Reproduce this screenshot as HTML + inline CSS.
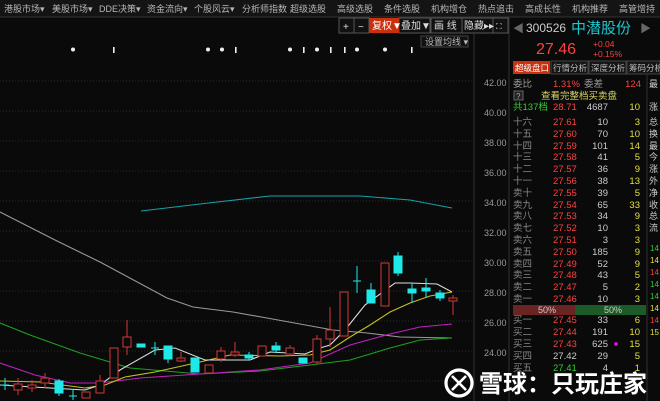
<!DOCTYPE html>
<html><head><meta charset="utf-8"><style>
body{margin:0;background:#0a0a0a;width:660px;height:401px;overflow:hidden}
svg{display:block;font-family:"Liberation Sans","Noto Sans CJK SC",sans-serif}
</style></head><body>
<svg width="660" height="401" viewBox="0 0 660 401" xmlns="http://www.w3.org/2000/svg">
<rect width="660" height="401" fill="#0a0a0a"/>
<rect x="0" y="0" width="660" height="17" fill="#141414"/>
<g fill="#b8b8b8" font-size="9">
<text x="4" y="12">港股市场▾</text><text x="52" y="12">美股市场▾</text><text x="99" y="12">DDE决策▾</text>
<text x="147" y="12">资金流向▾</text><text x="194" y="12">个股风云▾</text><text x="242" y="12">分析师指数</text>
<text x="290" y="12">超级选股</text><text x="337" y="12">高级选股</text><text x="384" y="12">条件选股</text>
<text x="431" y="12">机构增仓</text><text x="478" y="12">热点追击</text><text x="525" y="12">高成长性</text>
<text x="572" y="12">机构推荐</text><text x="619" y="12">高管增持</text></g>
<line x1="0" y1="17" x2="660" y2="17" stroke="#333"/>
<g stroke="#555" fill="#111">
<rect x="339" y="18" width="15" height="15"/><rect x="354" y="18" width="15" height="15"/>
<rect x="399" y="18" width="31" height="15"/><rect x="431" y="18" width="31" height="15"/>
<rect x="462" y="18" width="31" height="15"/><rect x="493" y="18" width="15" height="15"/></g>
<rect x="369" y="18" width="30" height="15" fill="#c8300e"/>
<g fill="#ddd" font-size="10"><text x="343" y="30">+</text><text x="358" y="30">−</text>
<text x="372" y="29" fill="#fff">复权▼</text><text x="401" y="29">叠加▼</text><text x="434" y="29">画 线</text><text x="464" y="29">隐藏▸▸</text><text x="496" y="29" font-size="8">⛶</text></g>
<rect x="421" y="36" width="47" height="11" fill="#111" stroke="#444"/>
<text x="425" y="45" fill="#bbb" font-size="9">设置均线 ▾</text>
<line x1="474" y1="33" x2="474" y2="401" stroke="#333"/>
<g stroke="#2a2a2a" stroke-dasharray="1 2">
<line x1="0" y1="81" x2="474" y2="81"/><line x1="0" y1="111" x2="474" y2="111"/><line x1="0" y1="141" x2="474" y2="141"/>
<line x1="0" y1="171" x2="474" y2="171"/><line x1="0" y1="201" x2="474" y2="201"/><line x1="0" y1="231" x2="474" y2="231"/>
<line x1="0" y1="261" x2="474" y2="261"/><line x1="0" y1="291" x2="474" y2="291"/><line x1="0" y1="321" x2="474" y2="321"/>
<line x1="0" y1="351" x2="474" y2="351"/><line x1="0" y1="381" x2="474" y2="381"/></g>
<g fill="#999" font-size="9"><text x="484" y="86">42.00</text><text x="484" y="116">40.00</text><text x="484" y="146">38.00</text>
<text x="484" y="176">36.00</text><text x="484" y="206">34.00</text><text x="484" y="236">32.00</text><text x="484" y="266">30.00</text>
<text x="484" y="296">28.00</text><text x="484" y="326">26.00</text><text x="484" y="356">24.00</text></g>
<g fill="#eee"><circle cx="73" cy="49.5" r="2"/><circle cx="208" cy="49.5" r="2"/><circle cx="222" cy="49.5" r="2"/><circle cx="290" cy="49.5" r="2"/><circle cx="317" cy="49.5" r="2"/><circle cx="357" cy="49.5" r="2"/><circle cx="385" cy="49.5" r="2"/>
<rect x="113" y="47" width="1.6" height="6"/><rect x="235" y="47" width="1.6" height="6"/><rect x="303" y="47" width="1.6" height="6"/><rect x="330" y="47" width="1.6" height="6"/><rect x="344" y="47" width="1.6" height="6"/><rect x="411" y="47" width="1.6" height="6"/></g>
<g fill="none" stroke-width="1.1">
<polyline stroke="#14a0a8" points="141,211 200,204 270,196 360,196 410,200 452,208"/>
<polyline stroke="#999" points="0,212 55,240 100,262 167,298 193,307 233,312 267,318 333,330 367,333 400,337 452,338"/>
<polyline stroke="#1fa01f" points="0,323 30,335 80,353 130,368 200,374 260,371 310,365 350,360 390,348 420,340 452,338"/>
<polyline stroke="#c020c0" points="0,363 35,375 70,383 100,383 140,378 200,374 260,370 310,363 350,345 390,334 420,327 452,324"/>
<polyline stroke="#c8c020" points="0,381 40,382 85,388 105,385 125,377 155,372 200,362 230,355 280,356 310,355 330,350 350,337 370,325 390,312 410,303 430,296 452,292"/>
<polyline stroke="#ddd" points="0,385 50,388 85,390 100,385 120,370 155,350 175,348 205,360 235,360 250,360 270,352 305,354 320,348 330,345 345,330 365,305 395,283 410,283 437,284 452,292"/></g>
<g stroke="#d03838" fill="#0a0a0a">
<line x1="18" y1="378" x2="18" y2="395"/><rect x="14" y="384" width="8" height="6"/>
<line x1="32" y1="380" x2="32" y2="392"/><rect x="28" y="385" width="8" height="3"/>
<line x1="45" y1="373" x2="45" y2="388"/><rect x="41" y="378" width="8" height="5"/>
<rect x="82" y="392" width="8" height="6"/>
<line x1="100" y1="375" x2="100" y2="393"/><rect x="96" y="381" width="8" height="12"/>
<rect x="110" y="348" width="8" height="30"/>
<line x1="127" y1="320" x2="127" y2="355"/><rect x="123" y="337" width="8" height="10"/>
<line x1="181" y1="352" x2="181" y2="362"/><rect x="177" y="358" width="8" height="3"/>
<rect x="205" y="365" width="8" height="8"/>
<line x1="221" y1="347" x2="221" y2="362"/><rect x="217" y="351" width="8" height="8"/>
<line x1="235" y1="342" x2="235" y2="357"/><rect x="231" y="352" width="8" height="3"/>
<rect x="258" y="346" width="8" height="10"/>
<line x1="290" y1="345" x2="290" y2="356"/><rect x="286" y="348" width="8" height="6"/>
<line x1="317" y1="335" x2="317" y2="364"/><rect x="313" y="339" width="8" height="23"/>
<line x1="330" y1="307" x2="330" y2="347"/><rect x="326" y="330" width="8" height="9"/>
<rect x="340" y="292" width="8" height="44"/>
<rect x="381" y="263" width="8" height="43"/>
<line x1="453" y1="295" x2="453" y2="315"/><rect x="449" y="298" width="8" height="3"/></g>
<g stroke="#1fe8e8" fill="#1fe8e8">
<line x1="5" y1="378" x2="5" y2="390"/><line x1="1" y1="385" x2="9" y2="385"/>
<line x1="59" y1="379" x2="59" y2="396"/><rect x="55" y="381" width="8" height="12"/>
<line x1="73" y1="390" x2="73" y2="400"/><line x1="69" y1="396" x2="77" y2="396"/>
<rect x="137" y="344" width="8" height="3"/>
<line x1="155" y1="342" x2="155" y2="355"/><line x1="151" y1="348" x2="159" y2="348"/>
<line x1="168" y1="346" x2="168" y2="363"/><rect x="164" y="346" width="8" height="13"/>
<rect x="191" y="358" width="8" height="14"/>
<line x1="249" y1="352" x2="249" y2="360"/><rect x="245" y="355" width="8" height="3"/>
<line x1="276" y1="342" x2="276" y2="353"/><rect x="272" y="346" width="8" height="4"/>
<rect x="299" y="358" width="8" height="5"/>
<line x1="357" y1="266" x2="357" y2="293"/><line x1="353" y1="281" x2="361" y2="281"/>
<line x1="371" y1="283" x2="371" y2="303"/><rect x="367" y="290" width="8" height="13"/>
<line x1="398" y1="252" x2="398" y2="276"/><rect x="394" y="256" width="8" height="17"/>
<line x1="412" y1="283" x2="412" y2="303"/><rect x="408" y="289" width="8" height="4"/>
<line x1="426" y1="278" x2="426" y2="298"/><rect x="422" y="288" width="8" height="3"/>
<line x1="440" y1="290" x2="440" y2="301"/><rect x="436" y="293" width="8" height="5"/></g>
<line x1="509" y1="17" x2="509" y2="401" stroke="#333"/>
<text x="513" y="32" fill="#666" font-size="11">◀</text>
<text x="526" y="32" fill="#ccc" font-size="12">300526</text>
<text x="571" y="33" fill="#1cc8d0" font-size="15">中潜股份</text>
<text x="640" y="32" fill="#666" font-size="11">▶</text>
<text x="536" y="54" fill="#ff4040" font-size="16">27.46</text>
<text x="593" y="47" fill="#ff4040" font-size="8.5">+0.04</text>
<text x="593" y="57" fill="#ff4040" font-size="8.5">+0.15%</text>
<rect x="513" y="61" width="37" height="13" fill="#c8300e"/>
<g stroke="#444" fill="#151515"><rect x="551" y="61" width="37" height="13"/><rect x="589" y="61" width="37" height="13"/><rect x="627" y="61" width="33" height="13"/></g>
<g font-size="8.5" fill="#bbb"><text x="515" y="71" fill="#fff">超级盘口</text><text x="553" y="71">行情分析</text><text x="591" y="71">深度分析</text><text x="629" y="71">筹码分析</text></g>
<line x1="647" y1="75" x2="647" y2="401" stroke="#333"/>
<g font-size="9.5">
<text x="513" y="87" fill="#999">委比</text><text x="553" y="87" fill="#ff4040">1.31%</text><text x="584" y="87" fill="#999">委差</text><text x="641" y="87" fill="#ff4040" text-anchor="end">124</text>
<rect x="514" y="91" width="9" height="9" fill="#222" stroke="#666"/><text x="516" y="99" fill="#aaa" font-size="8">?</text>
<text x="541" y="99" fill="#d8d860">查看完整档买卖盘</text>
<text x="513" y="110" fill="#3c3">共137档</text><text x="553" y="110" fill="#ff4040">28.71</text><text x="608" y="110" fill="#ccc" text-anchor="end">4687</text><text x="640" y="110" fill="#e0e040" text-anchor="end">10</text>
</g>
<g font-size="9.5">
<g fill="#888"><text x="513" y="125">十六</text><text x="513" y="137">十五</text><text x="513" y="149">十四</text><text x="513" y="160">十三</text><text x="513" y="172">十二</text><text x="513" y="184">十一</text><text x="513" y="196">卖十</text><text x="513" y="208">卖九</text><text x="513" y="219">卖八</text><text x="513" y="231">卖七</text><text x="513" y="243">卖六</text><text x="513" y="255">卖五</text><text x="513" y="267">卖四</text><text x="513" y="278">卖三</text><text x="513" y="290">卖二</text><text x="513" y="302">卖一</text>
<text x="513" y="323">买一</text><text x="513" y="335">买二</text><text x="513" y="347">买三</text><text x="513" y="359">买四</text><text x="513" y="371">买五</text></g>
<g fill="#ff4040"><text x="553" y="125">27.61</text><text x="553" y="137">27.60</text><text x="553" y="149">27.59</text><text x="553" y="160">27.58</text><text x="553" y="172">27.57</text><text x="553" y="184">27.56</text><text x="553" y="196">27.55</text><text x="553" y="208">27.54</text><text x="553" y="219">27.53</text><text x="553" y="231">27.52</text><text x="553" y="243">27.51</text><text x="553" y="255">27.50</text><text x="553" y="267">27.49</text><text x="553" y="278">27.48</text><text x="553" y="290">27.47</text><text x="553" y="302">27.46</text>
<text x="553" y="323">27.45</text><text x="553" y="335">27.44</text><text x="553" y="347">27.43</text></g>
<text x="553" y="359" fill="#ccc">27.42</text><text x="553" y="371" fill="#3c3">27.41</text>
<g fill="#ccc" text-anchor="end"><text x="608" y="125">10</text><text x="608" y="137">70</text><text x="608" y="149">101</text><text x="608" y="160">41</text><text x="608" y="172">36</text><text x="608" y="184">38</text><text x="608" y="196">39</text><text x="608" y="208">65</text><text x="608" y="219">34</text><text x="608" y="231">10</text><text x="608" y="243">3</text><text x="608" y="255">185</text><text x="608" y="267">52</text><text x="608" y="278">43</text><text x="608" y="290">5</text><text x="608" y="302">10</text>
<text x="608" y="323">33</text><text x="608" y="335">191</text><text x="608" y="347">625</text><text x="608" y="359">29</text><text x="608" y="371">4</text></g>
<g fill="#e0e040" text-anchor="end"><text x="640" y="125">3</text><text x="640" y="137">10</text><text x="640" y="149">14</text><text x="640" y="160">5</text><text x="640" y="172">9</text><text x="640" y="184">13</text><text x="640" y="196">5</text><text x="640" y="208">33</text><text x="640" y="219">9</text><text x="640" y="231">3</text><text x="640" y="243">3</text><text x="640" y="255">9</text><text x="640" y="267">9</text><text x="640" y="278">5</text><text x="640" y="290">2</text><text x="640" y="302">3</text>
<text x="640" y="323">6</text><text x="640" y="335">10</text><text x="640" y="347">15</text><text x="640" y="359">5</text><text x="640" y="371">1</text></g>
<circle cx="616" cy="344" r="1.8" fill="#f0f"/>
</g>
<rect x="513" y="305" width="62" height="10" fill="#6a2424"/><rect x="575" y="305" width="71" height="10" fill="#1c5a28"/>
<text x="538" y="313" fill="#ccc" font-size="9">50%</text><text x="604" y="313" fill="#ccc" font-size="9">50%</text>
<g font-size="9" fill="#ccc"><text x="649" y="87">最</text><text x="649" y="110">涨</text><text x="649" y="125">总</text><text x="649" y="137">换</text><text x="649" y="149">最</text><text x="649" y="160">今</text><text x="649" y="172">涨</text><text x="649" y="184">外</text><text x="649" y="196">净</text><text x="649" y="208">收</text><text x="649" y="219">总</text><text x="649" y="231">流</text></g>
<g font-size="8" fill="#3c3"><text x="650" y="251">14</text><text x="650" y="263" fill="#e0e040">14</text><text x="650" y="275" fill="#ff4040">14</text><text x="650" y="287" fill="#3c3">14</text><text x="650" y="299" fill="#3c3">14</text><text x="650" y="311" fill="#e0e040">14</text><text x="650" y="323" fill="#ff4040">14</text><text x="650" y="335" fill="#e0e040">15</text></g>
<circle cx="459" cy="383" r="13" fill="none" stroke="#fff" stroke-width="3.2"/>
<path d="M452 376 L466 390 M466 376 L452 390" stroke="#fff" stroke-width="2.6"/>
<text x="479" y="392" fill="#fff" font-size="24" font-weight="bold">雪球：只玩庄家</text>
</svg>
</body></html>
